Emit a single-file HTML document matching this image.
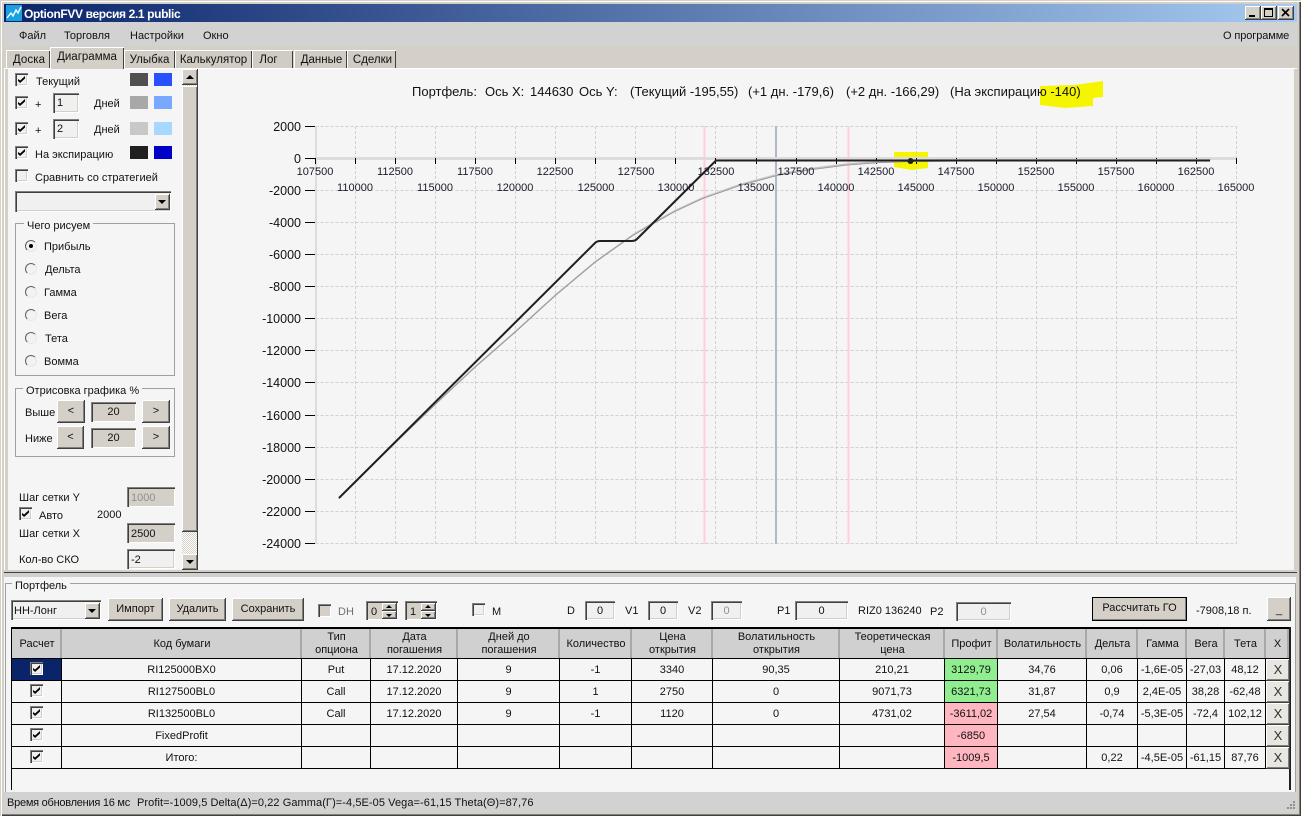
<!DOCTYPE html>
<html lang="ru"><head><meta charset="utf-8"><title>OptionFVV</title>
<style>
*{box-sizing:border-box}
html,body{margin:0;padding:0;width:1301px;height:816px;overflow:hidden;background:#d4d0c8}
body{position:relative;font:11px/14px "Liberation Sans","Noto Sans CJK SC",sans-serif;color:#111}
.a,.t,.b,.s,.cb,.r,.tab{position:absolute}
.t{white-space:nowrap;margin-top:1px}
.b{background:#d4d0c8;box-shadow:inset -1px -1px #404040,inset 1px 1px #fff,inset -2px -2px #808080;text-align:center;white-space:nowrap}
.s{background:#f0f0f0;box-shadow:inset 1px 1px #808080,inset 2px 2px #404040,inset -1px -1px #fff,inset -2px -2px #d4d0c8;text-align:center;white-space:nowrap}
.g{background:#d4d0c8}
.dis{color:#909090}
.cb{width:13px;height:13px;background:#f0f0f0;box-shadow:inset 1px 1px #808080,inset 2px 2px #404040,inset -1px -1px #fff,inset -2px -2px #d4d0c8}
.cb.on::after{content:"";position:absolute;left:3px;top:3px;width:7px;height:7px;background:#000;clip-path:polygon(0 42%,30% 65%,100% 0,100% 36%,30% 100%,0 72%)}
.cb.d{background:#d4d0c8}
.r{width:12px;height:12px;border-radius:50%;background:#f2f2f2;border:1px solid;border-color:#606060 #e8e8e8 #e8e8e8 #606060}
.r.on::after{content:"";position:absolute;left:3px;top:3px;width:4px;height:4px;border-radius:50%;background:#000}
.tab{background:#d0ccc4;box-shadow:inset 1px 1px #fff,inset -1px 0 #404040;text-align:center;line-height:20px;font-size:11.5px}
.sw{position:absolute;width:18px;height:13px}
.gb{position:absolute;border:1px solid #a0a0a0}
.lg{position:absolute;background:#f5f5f5;padding:0 3px;white-space:nowrap;margin-top:1px;height:13px}
.arr{position:absolute;width:0;height:0;border-left:4px solid transparent;border-right:4px solid transparent}
table{position:absolute;left:12px;top:629px;border-collapse:separate;border-spacing:0;table-layout:fixed;width:1277px}
th{height:30px;background:#d0d0d0;font-weight:normal;line-height:13px;padding:1px 0 0;text-align:center;border-bottom:1px solid #000;box-shadow:inset -2px 0 #a8a8a8,inset -1px 0 #fff}
td{height:22px;padding:0;text-align:center;border-right:1px solid #000;border-bottom:1px solid #000;background:#f5f5f5;position:relative}
td .cb{left:18px;top:3px}
.gr{background:#90ee90}.pk{background:#ffb6c1}
td.x{border-right:0;padding:0}
.xb{position:absolute;left:0;top:0;width:24px;height:22px;line-height:21px;font-size:13px;color:#333;background:#e8e6e0;box-shadow:inset -1px -1px #404040,inset 1px 1px #fff,inset -2px -2px #808080}
</style></head><body>

<!-- window frame -->
<div class="a" style="left:0;top:0;width:1301px;height:816px;box-shadow:inset 1px 1px #d4d0c8,inset 2px 2px #fff,inset -1px -1px #404040,inset -2px -2px #808080"></div>

<!-- title bar -->
<div class="a" style="left:4px;top:4px;width:1293px;height:18px;background:linear-gradient(90deg,#0a246a,#a6caf0)"></div>
<svg class="a" style="left:6px;top:5px" width="16" height="16" viewBox="0 0 16 16"><rect width="16" height="16" fill="#18a0e0"/><path d="M1 13 L5 8 L7 11 L10 5 L12 8 L15 2" fill="none" stroke="#fff" stroke-width="1.4"/></svg>
<div class="t" style="left:24px;top:6px;color:#fff;font-weight:bold;font-size:12px;letter-spacing:-.37px">OptionFVV версия 2.1 public</div>
<div class="b" style="left:1245px;top:6px;width:16px;height:14px"><div class="a" style="left:4px;top:9px;width:6px;height:2px;background:#000"></div></div>
<div class="b" style="left:1261px;top:6px;width:16px;height:14px"><div class="a" style="left:3px;top:2px;width:9px;height:9px;border:1px solid #000;border-top-width:2px"></div></div>
<div class="b" style="left:1278px;top:6px;width:16px;height:14px"><svg class="a" style="left:3px;top:2px" width="10" height="9"><path d="M1 1L8 8M8 1L1 8" stroke="#000" stroke-width="1.6"/></svg></div>

<!-- menu -->
<div class="a" style="left:4px;top:22px;width:1293px;height:24px;background:#d2d2d2"></div>
<div class="t" style="left:19px;top:28px">Файл</div>
<div class="t" style="left:64px;top:28px">Торговля</div>
<div class="t" style="left:130px;top:28px">Настройки</div>
<div class="t" style="left:203px;top:28px">Окно</div>
<div class="t" style="left:1223px;top:28px;letter-spacing:-.1px">О программе</div>

<!-- tabs -->
<div class="tab" style="left:6px;top:50px;width:44px;height:18px;padding-left:2px;letter-spacing:.1px">Доска</div>
<div class="tab" style="left:50px;top:47px;width:74px;height:22px;background:#d4d0c8;line-height:21px;z-index:2">Диаграмма</div>
<div class="tab" style="left:124px;top:50px;width:51px;height:18px">Улыбка</div>
<div class="tab" style="left:175px;top:50px;width:77px;height:18px">Калькулятор</div>
<div class="tab" style="left:252px;top:50px;width:41px;height:18px;padding-right:8px">Лог</div>
<div class="tab" style="left:294px;top:50px;width:53px;height:18px;padding-left:2px">Данные</div>
<div class="tab" style="left:347px;top:50px;width:49px;height:18px;padding-left:2px">Сделки</div>

<!-- top panel -->
<div class="a" style="left:4px;top:68px;width:1293px;height:1px;background:#fff"></div>
<div class="a" style="left:4px;top:68px;width:1px;height:504px;background:#fff"></div>
<div class="a" style="left:8px;top:69px;width:1286px;height:501px;background:#f5f5f5"></div>

<!-- left controls -->
<div class="cb on" style="left:15px;top:73px"></div><div class="t" style="left:36px;top:74px">Текущий</div>
<div class="sw" style="left:130px;top:73px;background:#505050"></div><div class="sw" style="left:154px;top:73px;background:#2850ff"></div>
<div class="cb on" style="left:15px;top:96px"></div><div class="t" style="left:35px;top:97px">+</div>
<div class="s" style="left:53px;top:93px;width:26px;height:20px;text-align:left;padding:3px 0 0 4px">1</div>
<div class="t" style="left:94px;top:96px">Дней</div>
<div class="sw" style="left:130px;top:96px;background:#a8a8a8"></div><div class="sw" style="left:154px;top:96px;background:#78a8ff"></div>
<div class="cb on" style="left:15px;top:122px"></div><div class="t" style="left:35px;top:123px">+</div>
<div class="s" style="left:53px;top:119px;width:26px;height:20px;text-align:left;padding:3px 0 0 4px">2</div>
<div class="t" style="left:94px;top:122px">Дней</div>
<div class="sw" style="left:130px;top:122px;background:#c8c8c8"></div><div class="sw" style="left:154px;top:122px;background:#a8d8ff"></div>
<div class="cb on" style="left:15px;top:146px"></div><div class="t" style="left:35px;top:147px">На экспирацию</div>
<div class="sw" style="left:130px;top:146px;background:#202020"></div><div class="sw" style="left:154px;top:146px;background:#0000c8"></div>
<div class="cb" style="left:15px;top:169px"></div><div class="t" style="left:35px;top:170px">Сравнить со стратегией</div>
<div class="s" style="left:15px;top:191px;width:156px;height:21px"></div>
<div class="b" style="left:155px;top:194px;width:15px;height:16px"><div class="arr" style="left:3px;top:6px;border-top:4px solid #000"></div></div>

<div class="gb" style="left:15px;top:223px;width:160px;height:153px"></div>
<div class="lg" style="left:24px;top:218px">Чего рисуем</div>
<div class="r on" style="left:25px;top:240px"></div><div class="t" style="left:44px;top:239px">Прибыль</div>
<div class="r" style="left:25px;top:263px"></div><div class="t" style="left:45px;top:262px">Дельта</div>
<div class="r" style="left:25px;top:286px"></div><div class="t" style="left:44px;top:285px">Гамма</div>
<div class="r" style="left:25px;top:309px"></div><div class="t" style="left:44px;top:308px">Вега</div>
<div class="r" style="left:25px;top:332px"></div><div class="t" style="left:45px;top:331px">Тета</div>
<div class="r" style="left:25px;top:355px"></div><div class="t" style="left:44px;top:354px">Вомма</div>

<div class="gb" style="left:15px;top:388px;width:160px;height:69px"></div>
<div class="lg" style="left:23px;top:383px">Отрисовка графика %</div>
<div class="t" style="left:25px;top:405px">Выше</div>
<div class="b" style="left:57px;top:400px;width:28px;height:23px;line-height:23px">&lt;</div>
<div class="s g" style="left:91px;top:402px;width:45px;height:20px;line-height:20px">20</div>
<div class="b" style="left:142px;top:400px;width:28px;height:23px;line-height:23px">&gt;</div>
<div class="t" style="left:25px;top:431px">Ниже</div>
<div class="b" style="left:57px;top:426px;width:27px;height:23px;line-height:23px">&lt;</div>
<div class="s g" style="left:91px;top:428px;width:45px;height:20px;line-height:20px">20</div>
<div class="b" style="left:142px;top:426px;width:28px;height:23px;line-height:23px">&gt;</div>

<div class="t" style="left:19px;top:490px">Шаг сетки Y</div>
<div class="s g dis" style="left:127px;top:487px;width:48px;height:20px;text-align:left;padding:4px 0 0 4px">1000</div>
<div class="cb on" style="left:19px;top:507px"></div><div class="t" style="left:39px;top:508px">Авто</div>
<div class="t" style="left:97px;top:507px">2000</div>
<div class="t" style="left:19px;top:526px">Шаг сетки X</div>
<div class="s g" style="left:127px;top:523px;width:48px;height:20px;text-align:left;padding:4px 0 0 4px">2500</div>
<div class="t" style="left:19px;top:552px">Кол-во СКО</div>
<div class="s" style="left:127px;top:549px;width:48px;height:20px;text-align:left;padding:4px 0 0 4px">-2</div>

<!-- scrollbar -->
<div class="a" style="left:182px;top:69px;width:16px;height:501px;background:repeating-conic-gradient(#d4d0c8 0 25%,#fff 0 50%) 0 0/2px 2px"></div>
<div class="a" style="left:197px;top:69px;width:1px;height:501px;background:#404040"></div>
<div class="b" style="left:182px;top:69px;width:16px;height:16px"><div class="arr" style="left:4px;top:6px;border-bottom:4px solid #000"></div></div>
<div class="b" style="left:182px;top:86px;width:16px;height:446px"></div>
<div class="b" style="left:182px;top:554px;width:16px;height:16px"><div class="arr" style="left:4px;top:6px;border-top:4px solid #000"></div></div>

<!-- chart -->
<svg class="a" style="left:0;top:0" width="1301" height="572" viewBox="0 0 1301 572" font-family="Liberation Sans, sans-serif">
<polygon points="1040,86 1075,85 1103,81 1103,97 1093,98 1093,106 1065,108 1040,105" fill="#f5f500"/>
<polygon points="894,152 928,152 928,168 912,170 894,167" fill="#f5f500"/>
<path fill="none" stroke="#d0d0d0" stroke-dasharray="3 2" d="M315.5 126.5H1236.5M315.5 190.5H1236.5M315.5 222.5H1236.5M315.5 254.5H1236.5M315.5 286.5H1236.5M315.5 318.5H1236.5M315.5 350.5H1236.5M315.5 382.5H1236.5M315.5 415.5H1236.5M315.5 447.5H1236.5M315.5 479.5H1236.5M315.5 511.5H1236.5M315.5 543.5H1236.5M355.5 126V544M395.5 126V544M435.5 126V544M475.5 126V544M515.5 126V544M555.5 126V544M595.5 126V544M635.5 126V544M675.5 126V544M715.5 126V544M756.5 126V544M796.5 126V544M836.5 126V544M876.5 126V544M916.5 126V544M956.5 126V544M996.5 126V544M1036.5 126V544M1076.5 126V544M1116.5 126V544M1156.5 126V544M1196.5 126V544M1236.5 126V544"/>
<path d="M704.5 126V544M848.5 126V544" stroke="#ffd0d8" stroke-width="2" fill="none"/>
<path d="M776 126V544" stroke="#b0b8c4" stroke-width="2" fill="none"/>
<path d="M316 126V544" stroke="#dcdcdc" stroke-width="2" fill="none"/>
<path d="M315 158.5H1236" stroke="#dcdcdc" stroke-width="3" fill="none"/>
<path stroke="#000" fill="none" d="M305 126.5H315M305 158.5H315M305 190.5H315M305 222.5H315M305 254.5H315M305 286.5H315M305 318.5H315M305 350.5H315M305 382.5H315M305 415.5H315M305 447.5H315M305 479.5H315M305 511.5H315M305 543.5H315"/>
<path stroke="#000" fill="none" d="M315.5 158V164M355.5 158V164M395.5 158V164M435.5 158V164M475.5 158V164M515.5 158V164M555.5 158V164M595.5 158V164M635.5 158V164M675.5 158V164M715.5 158V164M756.5 158V164M796.5 158V164M836.5 158V164M876.5 158V164M916.5 158V164M956.5 158V164M996.5 158V164M1036.5 158V164M1076.5 158V164M1116.5 158V164M1156.5 158V164M1196.5 158V164M1236.5 158V164"/>
<g fill="none" stroke-linejoin="round">
<polyline stroke="#d0d0d0" stroke-width="1.5" transform="translate(0.8,-0.8)" points="339,498 400,438 437,402.5 475,367 515,332 555,295.5 595,262 633,235 650,225 675,211 703,198 740,185 777,175 812,169 847,164.5 880,162 910,161 960,160.5 1210,160.5"/>
<polyline stroke="#bcbcbc" stroke-width="1.4" points="339,498 400,438 437,402.5 475,367 515,332 555,295.5 595,262 633,235 650,225 675,211 703,198 740,185 777,175 812,169 847,164.5 880,162 910,161 960,160.5 1210,160.5"/>
<polyline stroke="#909090" stroke-width=".7" transform="translate(-0.4,.7)" points="339,498 400,438 437,402.5 475,367 515,332 555,295.5 595,262 633,235 650,225 675,211 703,198 740,185 777,175 812,169 847,164.5 880,162 910,161 960,160.5 1210,160.5"/>
<path stroke="#202020" stroke-width="2" d="M339 498L595 243Q597 241 600 241L632 241Q635 241 637 239L716 160.5L1210 160.5"/>
</g>
<circle cx="910.5" cy="161" r="3" fill="#202020"/>
<g font-size="12.5" text-anchor="end" fill="#111">
<text x="301" y="131">2000</text><text x="301" y="163">0</text><text x="301" y="195">-2000</text><text x="301" y="227">-4000</text><text x="301" y="259">-6000</text><text x="301" y="291">-8000</text><text x="301" y="323">-10000</text><text x="301" y="355">-12000</text><text x="301" y="387">-14000</text><text x="301" y="420">-16000</text><text x="301" y="452">-18000</text><text x="301" y="484">-20000</text><text x="301" y="516">-22000</text><text x="301" y="548">-24000</text>
</g>
<g font-size="11" text-anchor="middle" fill="#1a1a2a">
<text x="315" y="175">107500</text><text x="395" y="175">112500</text><text x="475" y="175">117500</text><text x="555" y="175">122500</text><text x="636" y="175">127500</text><text x="716" y="175">132500</text><text x="796" y="175">137500</text><text x="876" y="175">142500</text><text x="956" y="175">147500</text><text x="1036" y="175">152500</text><text x="1116" y="175">157500</text><text x="1196" y="175">162500</text>
<text x="355" y="191">110000</text><text x="435" y="191">115000</text><text x="515" y="191">120000</text><text x="596" y="191">125000</text><text x="676" y="191">130000</text><text x="756" y="191">135000</text><text x="836" y="191">140000</text><text x="916" y="191">145000</text><text x="996" y="191">150000</text><text x="1076" y="191">155000</text><text x="1156" y="191">160000</text><text x="1236" y="191">165000</text>
</g>
<g font-size="13" fill="#111">
<text x="412" y="96">Портфель:</text><text x="485" y="96">Ось X:</text><text x="530" y="96">144630</text><text x="579" y="96">Ось Y:</text><text x="630" y="96">(Текущий -195,55)</text><text x="748" y="96">(+1 дн. -179,6)</text><text x="846" y="96">(+2 дн. -166,29)</text><text x="950" y="96">(На экспирацию -140)</text>
</g>
</svg>

<!-- splitter -->
<div class="a" style="left:4px;top:570px;width:1293px;height:2px;background:#d4d0c8"></div>
<div class="a" style="left:4px;top:572px;width:1293px;height:1px;background:#404040"></div>
<div class="a" style="left:4px;top:573px;width:1293px;height:4px;background:#d0d0d0"></div>

<!-- portfolio panel -->
<div class="a" style="left:4px;top:577px;width:1292px;height:215px;background:#f5f5f5"></div>
<div class="a" style="left:5px;top:583px;width:1291px;height:209px;border:1px solid #a0a0a0;border-bottom:0"></div>
<div class="lg" style="left:12px;top:578px">Портфель</div>

<div class="s" style="left:11px;top:600px;width:90px;height:20px;text-align:left;padding:4px 0 0 3px">НН-Лонг</div>
<div class="b" style="left:85px;top:603px;width:15px;height:16px"><div class="arr" style="left:3px;top:6px;border-top:4px solid #000"></div></div>
<div class="b" style="left:108px;top:598px;width:55px;height:23px;line-height:23px">Импорт</div>
<div class="b" style="left:169px;top:598px;width:57px;height:23px;line-height:23px">Удалить</div>
<div class="b" style="left:232px;top:598px;width:72px;height:23px;line-height:23px">Сохранить</div>
<div class="cb d" style="left:318px;top:604px"></div><div class="t dis" style="left:338px;top:604px;color:#707070">DH</div>
<div class="s g" style="left:366px;top:601px;width:32px;height:19px;text-align:left;padding:4px 0 0 5px">0</div>
<div class="b" style="left:382px;top:603px;width:15px;height:8px"><div class="arr" style="left:4px;top:2px;border-left-width:3px;border-right-width:3px;border-bottom:3px solid #000"></div></div>
<div class="b" style="left:382px;top:611px;width:15px;height:8px"><div class="arr" style="left:4px;top:3px;border-left-width:3px;border-right-width:3px;border-top:3px solid #000"></div></div>
<div class="s g" style="left:405px;top:601px;width:32px;height:19px;text-align:left;padding:4px 0 0 5px">1</div>
<div class="b" style="left:421px;top:603px;width:15px;height:8px"><div class="arr" style="left:4px;top:2px;border-left-width:3px;border-right-width:3px;border-bottom:3px solid #000"></div></div>
<div class="b" style="left:421px;top:611px;width:15px;height:8px"><div class="arr" style="left:4px;top:3px;border-left-width:3px;border-right-width:3px;border-top:3px solid #000"></div></div>
<div class="cb" style="left:472px;top:603px"></div><div class="t" style="left:492px;top:604px">M</div>
<div class="t" style="left:567px;top:603px">D</div>
<div class="s" style="left:585px;top:601px;width:30px;height:19px;line-height:20px">0</div>
<div class="t" style="left:625px;top:603px">V1</div>
<div class="s" style="left:648px;top:601px;width:30px;height:19px;line-height:20px">0</div>
<div class="t" style="left:688px;top:603px">V2</div>
<div class="s dis" style="left:711px;top:601px;width:31px;height:19px;line-height:20px">0</div>
<div class="t" style="left:777px;top:603px">P1</div>
<div class="s" style="left:795px;top:601px;width:53px;height:19px;line-height:20px">0</div>
<div class="t" style="left:858px;top:603px">RIZ0 136240</div>
<div class="t" style="left:930px;top:604px">P2</div>
<div class="s dis" style="left:956px;top:602px;width:55px;height:19px;line-height:20px">0</div>
<div class="b" style="left:1092px;top:597px;width:95px;height:24px;line-height:22px;outline:1px solid #000;outline-offset:-1px">Рассчитать ГО</div>
<div class="t" style="left:1196px;top:603px">-7908,18 п.</div>
<div class="b" style="left:1267px;top:597px;width:24px;height:24px;line-height:26px">_</div>

<!-- table frame -->
<div class="a" style="left:11px;top:627px;width:1279px;height:2px;background:#000"></div>
<div class="a" style="left:11px;top:627px;width:1px;height:163px;background:#000"></div>
<div class="a" style="left:1289px;top:627px;width:2px;height:163px;background:#202020"></div>

<table>
<colgroup><col style="width:50px"><col style="width:240px"><col style="width:69px"><col style="width:87px"><col style="width:102px"><col style="width:72px"><col style="width:81px"><col style="width:127px"><col style="width:105px"><col style="width:53px"><col style="width:89px"><col style="width:51px"><col style="width:49px"><col style="width:38px"><col style="width:41px"><col style="width:23px"></colgroup>
<tr><th>Расчет</th><th>Код бумаги</th><th>Тип<br>опциона</th><th>Дата<br>погашения</th><th>Дней до<br>погашения</th><th>Количество</th><th>Цена<br>открытия</th><th>Волатильность<br>открытия</th><th>Теоретическая<br>цена</th><th>Профит</th><th>Волатильность</th><th>Дельта</th><th>Гамма</th><th>Вега</th><th>Тета</th><th>X</th></tr>
<tr><td style="background:#0a246a"><span class="cb on"></span></td><td>RI125000BX0</td><td>Put</td><td>17.12.2020</td><td>9</td><td>-1</td><td>3340</td><td>90,35</td><td>210,21</td><td class="gr">3129,79</td><td>34,76</td><td>0,06</td><td>-1,6E-05</td><td>-27,03</td><td>48,12</td><td class="x"><div class="xb">X</div></td></tr>
<tr><td><span class="cb on"></span></td><td>RI127500BL0</td><td>Call</td><td>17.12.2020</td><td>9</td><td>1</td><td>2750</td><td>0</td><td>9071,73</td><td class="gr">6321,73</td><td>31,87</td><td>0,9</td><td>2,4E-05</td><td>38,28</td><td>-62,48</td><td class="x"><div class="xb">X</div></td></tr>
<tr><td><span class="cb on"></span></td><td>RI132500BL0</td><td>Call</td><td>17.12.2020</td><td>9</td><td>-1</td><td>1120</td><td>0</td><td>4731,02</td><td class="pk">-3611,02</td><td>27,54</td><td>-0,74</td><td>-5,3E-05</td><td>-72,4</td><td>102,12</td><td class="x"><div class="xb">X</div></td></tr>
<tr><td><span class="cb on"></span></td><td>FixedProfit</td><td></td><td></td><td></td><td></td><td></td><td></td><td></td><td class="pk">-6850</td><td></td><td></td><td></td><td></td><td></td><td class="x"><div class="xb">X</div></td></tr>
<tr><td><span class="cb on"></span></td><td>Итого:</td><td></td><td></td><td></td><td></td><td></td><td></td><td></td><td class="pk">-1009,5</td><td></td><td>0,22</td><td>-4,5E-05</td><td>-61,15</td><td>87,76</td><td class="x"><div class="xb">X</div></td></tr>
</table>

<!-- status bar -->
<div class="a" style="left:4px;top:792px;width:1293px;height:20px;background:#d2d2d2"></div>
<div class="t" style="left:7px;top:795px;letter-spacing:-.25px">Время обновления 16 мс</div>
<div class="t" style="left:137px;top:795px;letter-spacing:.07px">Profit=-1009,5 Delta(Δ)=0,22 Gamma(Γ)=-4,5E-05 Vega=-61,15 Theta(Θ)=87,76</div>
<svg class="a" style="left:1284px;top:800px" width="12" height="12"><path d="M9 1h2v2h-2zM6 4h2v2h-2zM9 4h2v2h-2zM3 7h2v2h-2zM6 7h2v2h-2zM9 7h2v2h-2z" fill="#909090"/></svg>
</body></html>
